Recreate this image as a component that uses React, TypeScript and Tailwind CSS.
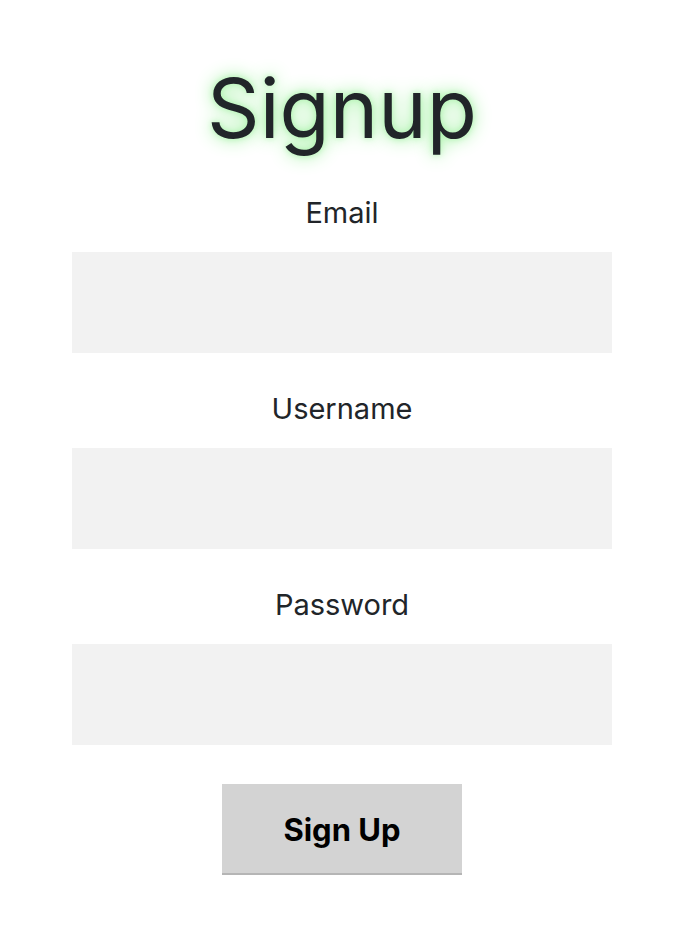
export default function App() {
  return (
    <div className="min-h-screen bg-white font-['Inter','Noto_Sans',sans-serif] text-[#212529]">
      <form className="flex flex-col items-center pt-[68px]">
        <h1 className="text-[82px] leading-[82px] font-normal [text-shadow:0_0_18px_#90ee90,0_0_6px_#b8f5b8]">
          Signup
        </h1>
        <label className="mt-[46px] text-[29px] leading-[34px]">Email</label>
        <input type="email" className="mt-[22px] h-[101px] w-[540px] bg-[#f2f2f2] outline-none" />
        <label className="mt-[39px] text-[29px] leading-[34px]">Username</label>
        <input type="text" className="mt-[22px] h-[101px] w-[540px] bg-[#f2f2f2] outline-none" />
        <label className="mt-[39px] text-[29px] leading-[34px]">Password</label>
        <input type="password" className="mt-[22px] h-[101px] w-[540px] bg-[#f2f2f2] outline-none" />
        <button
          type="button"
          className="mt-[39px] h-[91px] w-[240px] border-b-2 border-[#b5b5b5] bg-[#d3d3d3] pt-[3px] text-[31px] font-bold text-black"
        >
          Sign Up
        </button>
      </form>
    </div>
  );
}
